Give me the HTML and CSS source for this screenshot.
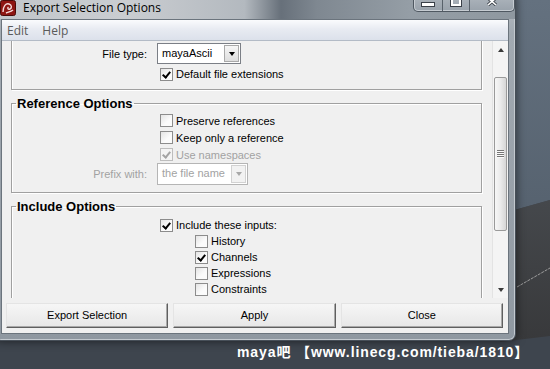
FILE: index.html
```html
<!DOCTYPE html>
<html>

<head>
    <meta charset="utf-8">
    <meta name="viewport" content="width=device-width, initial-scale=1">
    <title>Export Selection Options</title>
    <link rel="stylesheet" href="styles.css">
</head>

<body>
    <div class="desktop">
        <svg class="backdrop" width="550" height="369" viewBox="0 0 550 369">
            <defs>
                <linearGradient id="sky" x1="0" y1="0" x2="0" y2="1">
                    <stop offset="0" stop-color="#64717f"/>
                    <stop offset="1" stop-color="#56626f"/>
                </linearGradient>
                <linearGradient id="view" x1="0" y1="0" x2="0" y2="1">
                    <stop offset="0" stop-color="#45484c"/>
                    <stop offset="1" stop-color="#38393b"/>
                </linearGradient>
            </defs>
            <rect width="550" height="369" fill="#3e454e"/>
            <polygon points="500,0 550,0 550,200 500,214" fill="url(#sky)"/>
            <polygon points="500,214 550,200 550,336 500,342" fill="url(#view)"/>
            <line x1="517" y1="287" x2="550" y2="268" stroke="#9c9c9c" stroke-width="1" stroke-dasharray="3 1"/>
        </svg>

        <div class="window">
            <div class="titlebar">
                <span class="app-icon">
                    <svg width="16" height="16" viewBox="0 0 16 16">
                        <rect x="0.5" y="0.5" width="15" height="15" rx="2" fill="#8e1512" stroke="#4a0a08"/>
                        <path d="M3 12 C3 6 6 3 9 4 C12 5 12 8 10 9 C8 10 7 8 8.5 7 M6 13 C8 12 11 12 13 10" stroke="#f4dada" stroke-width="1.4" fill="none"/>
                    </svg>
                </span>
                <span class="title">Export Selection Options</span>
                <div class="controls">
                    <span class="ctl min"><span class="bar"></span></span>
                    <span class="ctl max"><span class="box"></span></span>
                    <span class="ctl close">
                        <svg width="10" height="9" viewBox="0 0 10 9">
                            <path d="M1 1 L9 8 M9 1 L1 8" stroke="#3a4048" stroke-width="3.2"/>
                            <path d="M1 1 L9 8 M9 1 L1 8" stroke="#fff" stroke-width="1.6"/>
                        </svg>
                    </span>
                </div>
            </div>

            <div class="client">
                <div class="menubar">
                    <span>Edit</span>
                    <span>Help</span>
                </div>

                <div class="main">
                    <div class="panel">
                        <div class="scroller">
                            <fieldset class="frame first">
                                <div class="row tall">
                                    <span class="lbl">File type:</span>
                                    <div class="combo">
                                        <span class="val">mayaAscii</span>
                                        <span class="drop"></span>
                                    </div>
                                </div>
                                <div class="row">
                                    <span class="lbl"></span>
                                    <div class="opt"><span class="check on"></span>Default file extensions</div>
                                </div>
                            </fieldset>

                            <fieldset class="frame ref">
                                <legend>Reference Options</legend>
                                <div class="row r17">
                                    <span class="lbl"></span>
                                    <div class="opt"><span class="check"></span>Preserve references</div>
                                </div>
                                <div class="row r17">
                                    <span class="lbl"></span>
                                    <div class="opt"><span class="check"></span>Keep only a reference</div>
                                </div>
                                <div class="row r17">
                                    <span class="lbl"></span>
                                    <div class="opt off"><span class="check on"></span>Use namespaces</div>
                                </div>
                                <div class="row tall">
                                    <span class="lbl off">Prefix with:</span>
                                    <div class="combo off wide">
                                        <span class="val">the file name</span>
                                        <span class="drop"></span>
                                    </div>
                                </div>
                            </fieldset>

                            <fieldset class="frame inc">
                                <legend>Include Options</legend>
                                <div class="row">
                                    <span class="lbl"></span>
                                    <div class="opt"><span class="check on"></span>Include these inputs:</div>
                                </div>
                                <div class="row">
                                    <span class="lbl"></span>
                                    <div class="opt sub"><span class="check"></span>History</div>
                                </div>
                                <div class="row">
                                    <span class="lbl"></span>
                                    <div class="opt sub"><span class="check on"></span>Channels</div>
                                </div>
                                <div class="row">
                                    <span class="lbl"></span>
                                    <div class="opt sub"><span class="check"></span>Expressions</div>
                                </div>
                                <div class="row">
                                    <span class="lbl"></span>
                                    <div class="opt sub"><span class="check"></span>Constraints</div>
                                </div>
                            </fieldset>
                        </div>
                    </div>

                    <div class="scrollbar">
                        <span class="arrow up"></span>
                        <span class="track">
                            <span class="thumb"><span class="grip"></span></span>
                        </span>
                        <span class="arrow down"></span>
                    </div>
                </div>

                <div class="buttons">
                    <button>Export Selection</button>
                    <button>Apply</button>
                    <button>Close</button>
                </div>
            </div>
        </div>

        <div class="watermark">maya吧 【www.linecg.com/tieba/1810】</div>
    </div>
</body>

</html>
```

FILE: styles.css
```css
* {
    box-sizing: border-box;
}

body {
    margin: 0;
    background: #3e454e;
    font-family: "Liberation Sans", Arial, sans-serif;
    font-size: 11px;
    color: #000;
}

.desktop {
    position: relative;
    width: 550px;
    height: 369px;
    overflow: hidden;
}

.backdrop {
    position: absolute;
    left: 0;
    top: 0;
}

/* window on the desktop */
.window {
    position: absolute;
    left: -6px;
    top: -8px;
    width: 522px;
    height: 349px;
    display: flex;
    flex-direction: column;
    padding: 0 6px 6px 6px;
    border: 1px solid #474f58;
    border-radius: 7px;
    background: linear-gradient(to bottom, #b9bfc5 0, #a2aab2 40px, #8f98a1 100%);
    box-shadow: 0 0 10px rgba(0, 0, 0, .55), inset 0 0 0 1px #c3c9cf;
}

.titlebar {
    position: relative;
    height: 26px;
    display: flex;
    align-items: center;
    padding-top: 3px;
    margin: 0 -6px;
    padding-left: 5px;
    border-radius: 6px 6px 0 0;
    background: linear-gradient(90deg, #c2c6ca 0, #cacdd1 25%, #b3b9bf 48%, #67707a 55%, #7f8891 62%, #959ea6 80%, #8f98a0 100%);
}

.app-icon {
    width: 16px;
    height: 16px;
    margin-right: 7px;
}

.app-icon svg {
    display: block;
}

.title {
    font-family: "Open Sans", "Liberation Sans", sans-serif;
    font-size: 12px;
    color: #000;
}

.controls {
    position: absolute;
    top: -1px;
    right: 0px;
    display: flex;
    height: 20px;
    border: 1px solid #4f5861;
    border-top: none;
    border-radius: 0 0 5px 5px;
    overflow: hidden;
    background: linear-gradient(to bottom, #b3bac1, #99a2ab);
    box-shadow: inset 0 0 0 1px #c6ccd2;
}

.ctl {
    display: flex;
    align-items: center;
    justify-content: center;
    height: 100%;
    border-right: 1px solid #58616a;
}

.ctl.min {
    width: 29px;
}

.ctl.max {
    width: 27px;
}

.ctl.close {
    width: 44px;
    border-right: none;
}

.ctl .bar {
    width: 14px;
    height: 5px;
    margin-top: 5px;
    background: #fff;
    border: 1px solid #3a4048;
}

.ctl .box {
    width: 10px;
    height: 9px;
    border: 2px solid #fff;
    outline: 1px solid #3a4048;
}

.ctl svg {
    display: block;
}

/* client area */
.client {
    flex: 1;
    display: flex;
    flex-direction: column;
    border: 1px solid #6b747d;
    background: #f0f0f0;
}

.menubar {
    height: 21px;
    display: flex;
    align-items: center;
    gap: 14px;
    padding-left: 5px;
    border-bottom: 1px solid #b3bbc6;
    background: linear-gradient(to bottom, #fafbfd 0, #e8ebf2 45%, #dce1eb 100%);
    font-family: "Open Sans", "Liberation Sans", sans-serif;
    font-size: 12px;
    color: #5a5a5a;
}

.main {
    height: 257px;
    display: flex;
}

.panel {
    flex: 1;
    overflow: hidden;
    padding: 0 10px 0 9px;
}

.scroller {
    margin-top: -12px;
}

.frame {
    margin: 0;
    padding: 0;
    min-width: 0;
    border: 1px solid #a0a0a0;
    box-shadow: 1px 1px 0 #fff, inset 1px 1px 0 #fff;
}

.frame legend {
    margin-left: 4px;
    padding: 0 1px;
    font-weight: bold;
    font-size: 13px;
    line-height: 15px;
}

.frame.first {
    padding: 13px 0 7px 0;
}

.frame.ref {
    margin-top: 6px;
    padding: 1px 0 7px 0;
}

.frame.inc {
    margin-top: 6px;
    padding: 3px 0 20px 0;
}

.row {
    display: grid;
    grid-template-columns: 135px 1fr;
    column-gap: 10px;
    align-items: center;
    height: 16px;
}

.row.r17 {
    height: 17px;
}

.row.tall {
    height: 22px;
}

.frame.first .row.tall {
    height: 21px;
    margin-bottom: 2px;
}

.lbl {
    text-align: right;
}

.off,
.lbl.off {
    color: #a2a2a2;
}

.opt {
    display: flex;
    align-items: center;
    gap: 3px;
    margin-left: 3px;
}

.opt.sub {
    margin-left: 38px;
}

.check {
    position: relative;
    width: 13px;
    height: 13px;
    border: 1px solid #8c8c8c;
    background: linear-gradient(135deg, #e4e4e4, #fbfbfb 60%);
}

.check.on::after {
    content: "";
    position: absolute;
    left: 3px;
    top: 1px;
    width: 3px;
    height: 6px;
    border: solid #000;
    border-width: 0 2px 2px 0;
    transform: rotate(40deg);
}

.off .check {
    border-color: #bdbdbd;
    background: #f4f4f4;
}

.off .check.on::after {
    border-color: #a4a4a4;
}

.combo {
    display: flex;
    width: 84px;
    height: 21px;
    border: 1px solid #7b7f86;
    background: #fff;
}

.combo.wide {
    width: 91px;
    height: 22px;
    border-color: #b5b5b5;
}

.combo .val {
    flex: 1;
    padding-left: 4px;
    line-height: 19px;
    white-space: nowrap;
}

.combo .drop {
    width: 15px;
    margin: 1px;
    display: flex;
    align-items: center;
    justify-content: center;
    border: 1px solid #a9a9a9;
    background: linear-gradient(to bottom, #f6f6f6, #dedede);
}

.combo .drop::before {
    content: "";
    border-left: 3.5px solid transparent;
    border-right: 3.5px solid transparent;
    border-top: 4px solid #000;
}

.combo.off .drop {
    border-color: #d2d2d2;
    background: #f2f2f2;
}

.combo.off .drop::before {
    border-top-color: #a8a8a8;
}

/* scrollbar */
.scrollbar {
    width: 16px;
    display: flex;
    flex-direction: column;
    border-left: 1px solid #e3e3e3;
    background: #f4f4f4;
}

.arrow {
    height: 17px;
    display: flex;
    align-items: center;
    justify-content: center;
}

.arrow.up::before {
    content: "";
    border-left: 3.5px solid transparent;
    border-right: 3.5px solid transparent;
    border-bottom: 4px solid #3a3a3a;
}

.arrow.down::before {
    content: "";
    border-left: 3.5px solid transparent;
    border-right: 3.5px solid transparent;
    border-top: 4px solid #3a3a3a;
}

.track {
    flex: 1;
    padding: 19px 0 0 1px;
}

.thumb {
    width: 13px;
    height: 154px;
    display: flex;
    align-items: center;
    justify-content: center;
    border: 1px solid #9a9a9a;
    border-radius: 2px;
    background: linear-gradient(90deg, #f7f7f7 0, #ececec 45%, #d6d6d6 100%);
}

.grip {
    width: 7px;
    height: 8px;
    background: repeating-linear-gradient(to bottom, #767676 0, #767676 1px, #fafafa 1px, #fafafa 2px);
}

/* dialog buttons */
.buttons {
    height: 35px;
    display: grid;
    grid-template-columns: repeat(3, 1fr);
    gap: 5px;
    padding: 5px 5px 5px 4px;
}

button {
    font-family: "Liberation Sans", Arial, sans-serif;
    font-size: 11px;
    line-height: 13px;
    color: #000;
    border: 1px solid;
    border-color: #e4e4e4 #5f5f5f #5f5f5f #e4e4e4;
    background: linear-gradient(to bottom, #f6f6f6, #e7e7e7);
    box-shadow: inset -1px -1px 0 #a8a8a8;
    padding: 0;
}

.watermark {
    position: absolute;
    left: 237px;
    top: 343px;
    font-family: "Liberation Sans", "Noto Sans CJK SC", sans-serif;
    font-weight: bold;
    font-size: 14px;
    line-height: 18px;
    letter-spacing: .9px;
    color: #fff;
    white-space: nowrap;
}
```
